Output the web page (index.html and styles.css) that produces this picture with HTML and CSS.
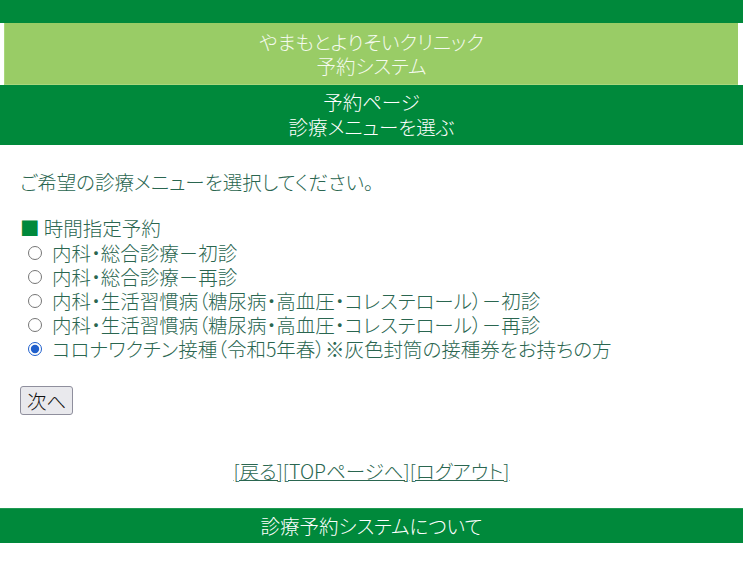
FILE: index.html
```html
<!DOCTYPE html>
<html lang="ja">
<head>
<meta charset="utf-8">
<title>予約ページ</title>
<link rel="stylesheet" href="styles.css">
</head>
<body>
<div class="top-bar"></div>
<div class="title">やまもとよりそいクリニック<br>予約システム</div>
<div class="subtitle">予約ページ<br>診療メニューを選ぶ</div>
<form class="main">
  <p class="lead">ご希望の診療メニューを選択してください。</p>
  <div class="group-title"><span class="mark">■</span> 時間指定予約</div>
  <label class="row"><input type="radio" name="menu" class="radio">内科・総合診療－初診</label>
  <label class="row"><input type="radio" name="menu" class="radio">内科・総合診療－再診</label>
  <label class="row"><input type="radio" name="menu" class="radio">内科・生活習慣病（糖尿病・高血圧・コレステロール）－初診</label>
  <label class="row"><input type="radio" name="menu" class="radio">内科・生活習慣病（糖尿病・高血圧・コレステロール）－再診</label>
  <label class="row"><input type="radio" name="menu" class="radio" checked>コロナワクチン接種（令和5年春）※灰色封筒の接種券をお持ちの方</label>
  <div class="actions"><button type="button" class="btn">次へ</button></div>
</form>
<div class="links"><a href="#">[戻る]</a><a href="#">[TOPページへ]</a><a href="#">[ログアウト]</a></div>
<div class="footer">診療予約システムについて</div>
</body>
</html>
```

FILE: styles.css
```css
html, body {
  margin: 0;
  padding: 0;
  background: #ffffff;
}
body {
  font-family: "Noto Sans CJK JP", "Noto Sans", sans-serif;
  font-size: 19.5px;
  font-weight: 300;
  line-height: 24px;
  font-feature-settings: "palt";
  color: #2a6650;
}
.top-bar {
  height: 23px;
  background: #00893b;
}
.title {
  background: #99cc66;
  color: #f4faee;
  text-align: center;
  margin: 0 5px 0 4px;
  border-left: 1px solid #a9d67c;
  border-bottom: 1px solid #a9d67c;
  box-sizing: border-box;
  height: 62px;
  padding-top: 7px;
}
.subtitle {
  background: #00893b;
  color: #ffffff;
  text-align: center;
  padding: 4px 0 6px;
  line-height: 25px;
}
.main {
  padding: 25px 20px 0;
  margin: 0;
}
.lead {
  margin: 0 0 22px;
}
.group-title {
  margin-bottom: 1px;
}
.mark {
  color: #00893b;
}
.row {
  display: flex;
  align-items: center;
  height: 24px;
  white-space: nowrap;
}
.radio {
  margin: 0 10px 0 8px;
  width: 14px;
  height: 14px;
  accent-color: #1f5fcc;
}
.actions {
  margin-top: 25px;
  height: 29px;
}
.btn {
  font-family: "Noto Sans CJK JP", sans-serif;
  font-size: 19.5px;
  font-weight: 300;
  font-feature-settings: "palt";
  line-height: 25px;
  white-space: nowrap;
  color: #111111;
  background: #e9e9ed;
  border: 1px solid #8f8f9d;
  border-radius: 3px;
  padding: 1px 6px;
  height: 29px;
  box-sizing: border-box;
}
.links {
  text-align: center;
  margin-top: 44px;
}
.links a {
  color: #2a6650;
  text-decoration: underline;
}
.footer {
  margin-top: 25px;
  background: #00893b;
  border-top: 1px solid #1f9a52;
  color: #ffffff;
  text-align: center;
  height: 35px;
  box-sizing: border-box;
  line-height: 34px;
}
```
